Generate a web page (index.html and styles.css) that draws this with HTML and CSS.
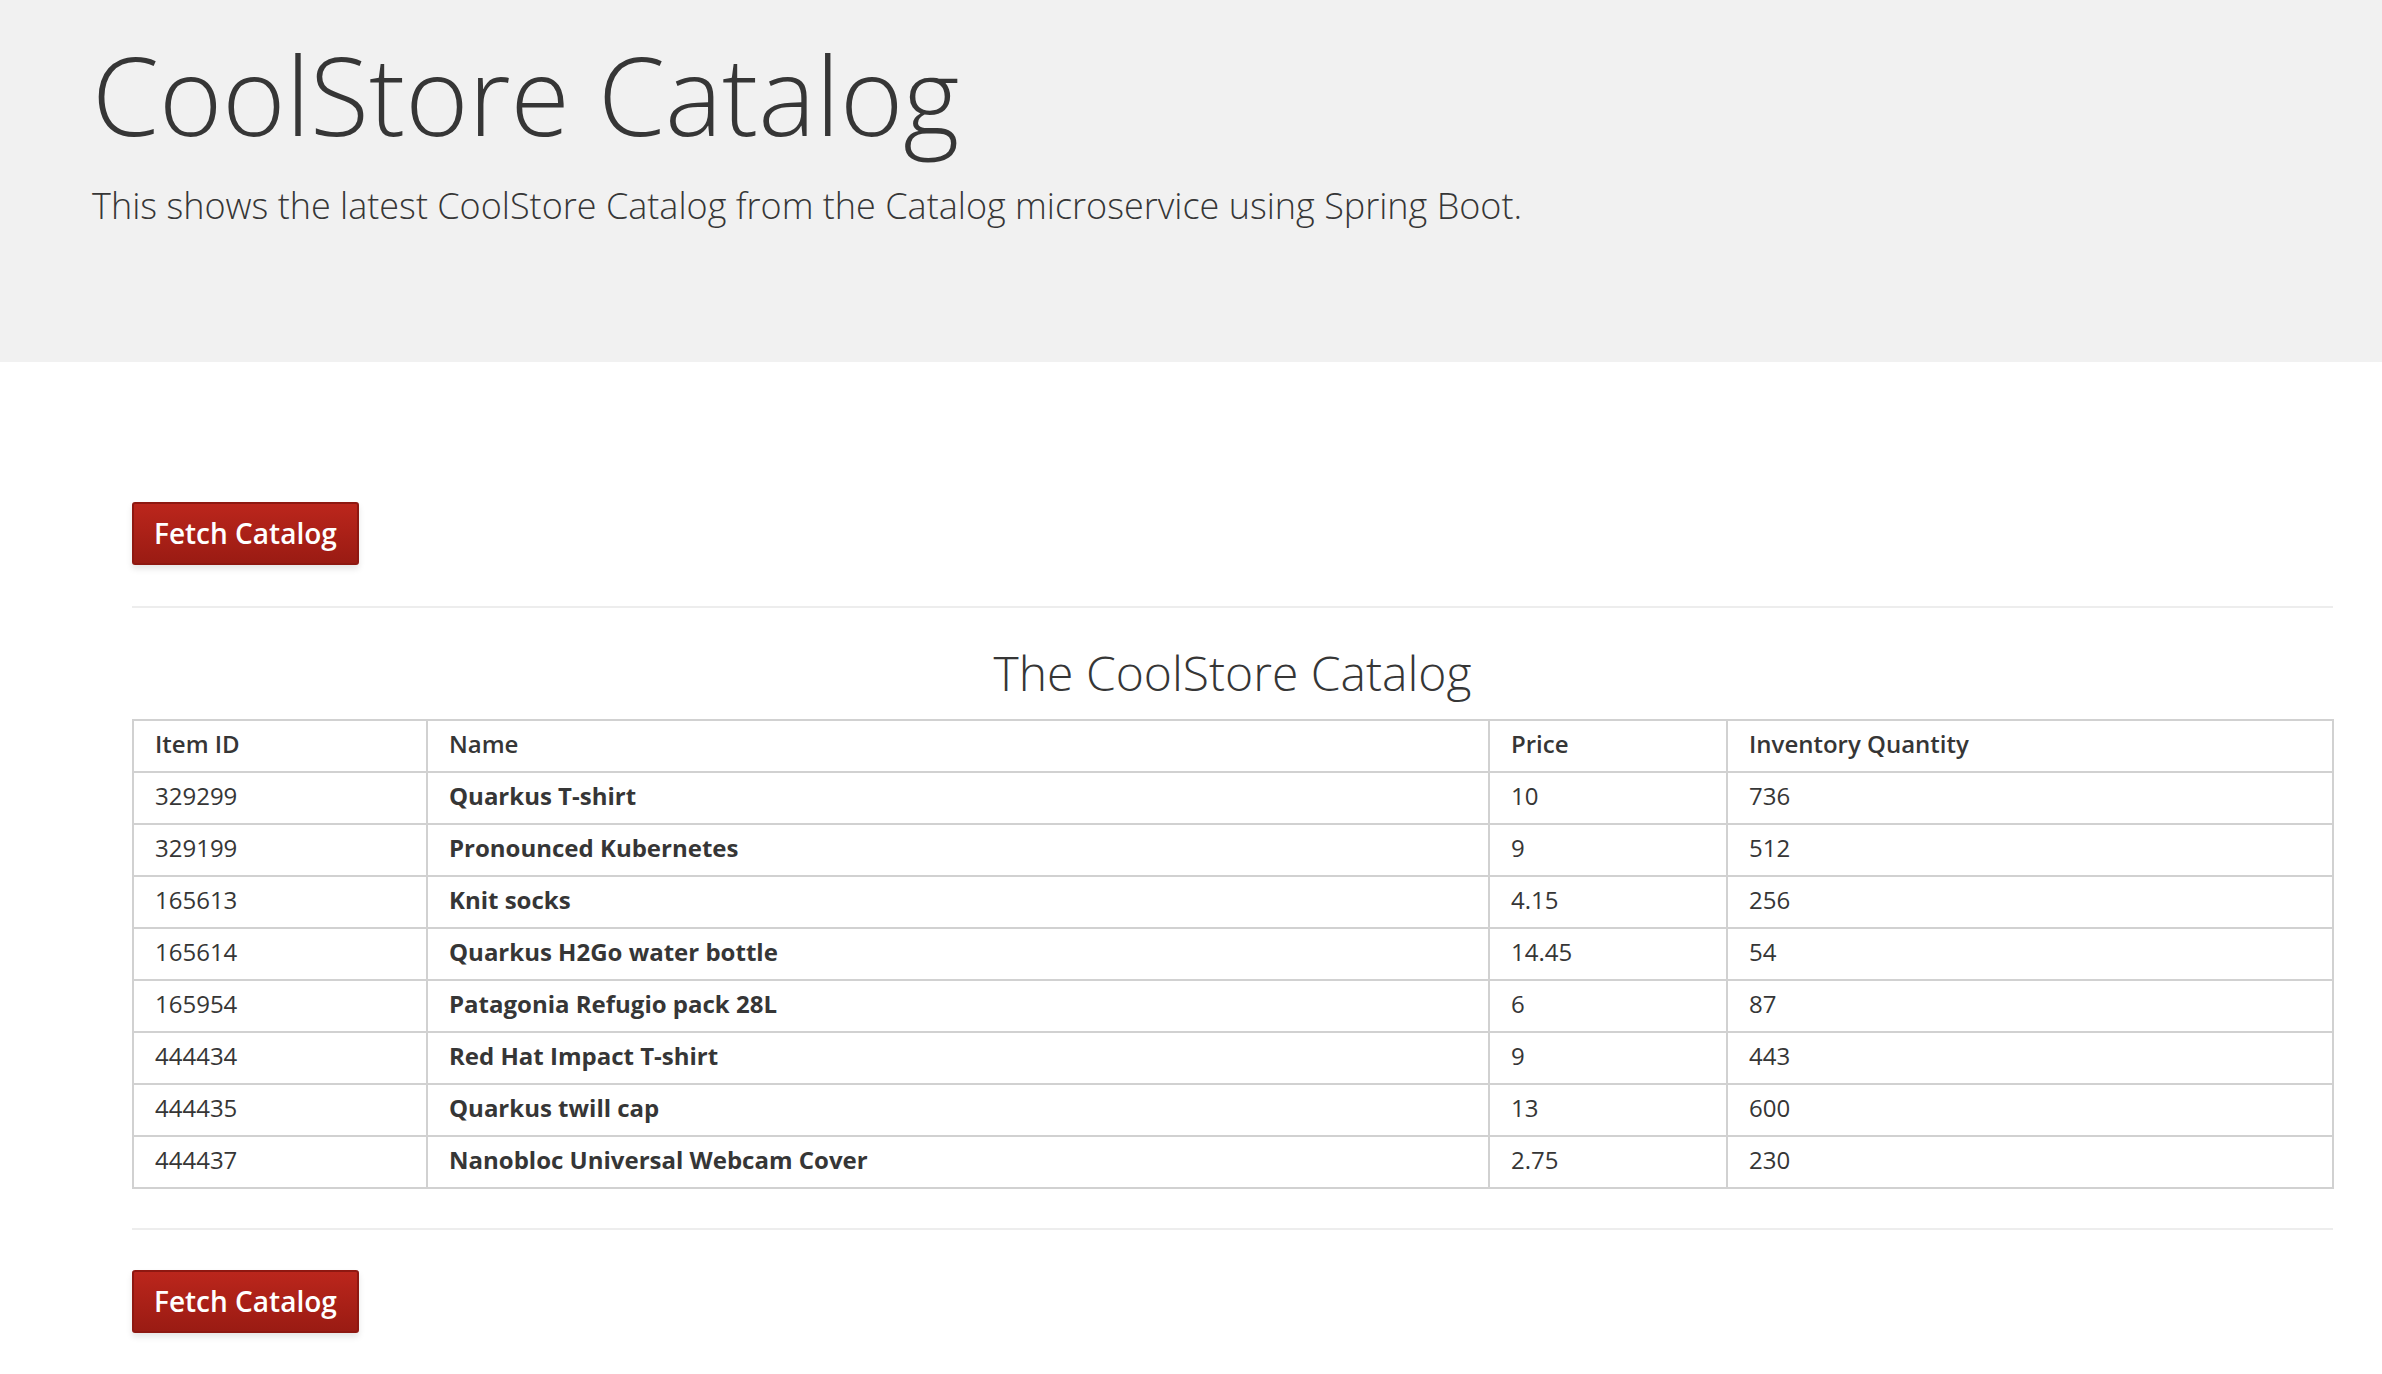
FILE: index.html
```html
<!DOCTYPE html>
<html lang="en">
<head>
<meta charset="utf-8">
<title>CoolStore Catalog</title>
<link rel="stylesheet" href="styles.css">
</head>
<body>
<header class="jumbotron">
  <h1 class="jumbo-title">CoolStore Catalog</h1>
  <p class="jumbo-lead">This shows the latest CoolStore Catalog from the Catalog microservice using Spring Boot.</p>
</header>
<main class="content">
  <div class="action-row"><button class="btn-fetch" type="button">Fetch Catalog</button></div>
  <hr class="divider">
  <h2 class="catalog-title">The CoolStore Catalog</h2>
  <table class="catalog">
    <colgroup>
      <col class="c-id"><col class="c-name"><col class="c-price"><col class="c-qty">
    </colgroup>
    <thead>
      <tr><th>Item ID</th><th>Name</th><th>Price</th><th>Inventory Quantity</th></tr>
    </thead>
    <tbody>
      <tr><td>329299</td><td><b>Quarkus T-shirt</b></td><td>10</td><td>736</td></tr>
      <tr><td>329199</td><td><b>Pronounced Kubernetes</b></td><td>9</td><td>512</td></tr>
      <tr><td>165613</td><td><b>Knit socks</b></td><td>4.15</td><td>256</td></tr>
      <tr><td>165614</td><td><b>Quarkus H2Go water bottle</b></td><td>14.45</td><td>54</td></tr>
      <tr><td>165954</td><td><b>Patagonia Refugio pack 28L</b></td><td>6</td><td>87</td></tr>
      <tr><td>444434</td><td><b>Red Hat Impact T-shirt</b></td><td>9</td><td>443</td></tr>
      <tr><td>444435</td><td><b>Quarkus twill cap</b></td><td>13</td><td>600</td></tr>
      <tr><td>444437</td><td><b>Nanobloc Universal Webcam Cover</b></td><td>2.75</td><td>230</td></tr>
    </tbody>
  </table>
  <hr class="divider divider-bottom">
  <div class="action-row"><button class="btn-fetch" type="button">Fetch Catalog</button></div>
</main>
</body>
</html>
```

FILE: styles.css
```css
html, body {
  margin: 0;
  padding: 0;
  background: #ffffff;
}
body {
  font-family: "Open Sans", "Noto Sans", "Liberation Sans", sans-serif;
  color: #363636;
}
.jumbotron {
  background: #f1f1f1;
  height: 362px;
  box-sizing: border-box;
  padding: 36px 0 0 92px;
}
.jumbo-title {
  margin: 0;
  font-size: 108px;
  line-height: 1.1;
  font-weight: 300;
  color: #363636;
}
.jumbo-lead {
  margin: 26px 0 0 0;
  font-size: 36px;
  line-height: 1.4;
  font-weight: 300;
  color: #363636;
}
.content {
  padding: 140px 49px 60px 132px;
}
.action-row {
  display: flex;
}
.btn-fetch {
  font-family: "Open Sans", "Noto Sans", "Liberation Sans", sans-serif;
  font-size: 28px;
  font-weight: 600;
  line-height: 36px;
  color: #ffffff;
  padding: 11px 20px 12px 20px;
  border: 2px solid #8e1811;
  border-radius: 3px;
  background: linear-gradient(to bottom, #bb261c 0%, #9a1b13 100%);
  box-shadow: 0 4px 6px rgba(3, 3, 3, 0.1);
  cursor: pointer;
}
.divider {
  margin: 41px 0 0 0;
  border: 0;
  height: 2px;
  background: #ededed;
}
.divider-bottom {
  margin: 39px 0 40px 0;
}
.catalog-title {
  margin: 39px 0 19px 0;
  text-align: center;
  font-size: 48px;
  line-height: 1.1;
  font-weight: 300;
  color: #363636;
}
.catalog {
  width: 2200px;
  border-collapse: collapse;
  table-layout: fixed;
  font-size: 24px;
}
.catalog th,
.catalog td {
  border: 2px solid #d1d1d1;
  padding: 1px 21px 5px 21px;
  line-height: 44px;
  text-align: left;
  white-space: nowrap;
  color: #363636;
}
.catalog th {
  font-weight: 600;
}
.catalog td {
  font-weight: 400;
}
.catalog b {
  font-weight: 700;
}
.c-id { width: 294px; }
.c-name { width: 1062px; }
.c-price { width: 238px; }
.c-qty { width: 606px; }
```
